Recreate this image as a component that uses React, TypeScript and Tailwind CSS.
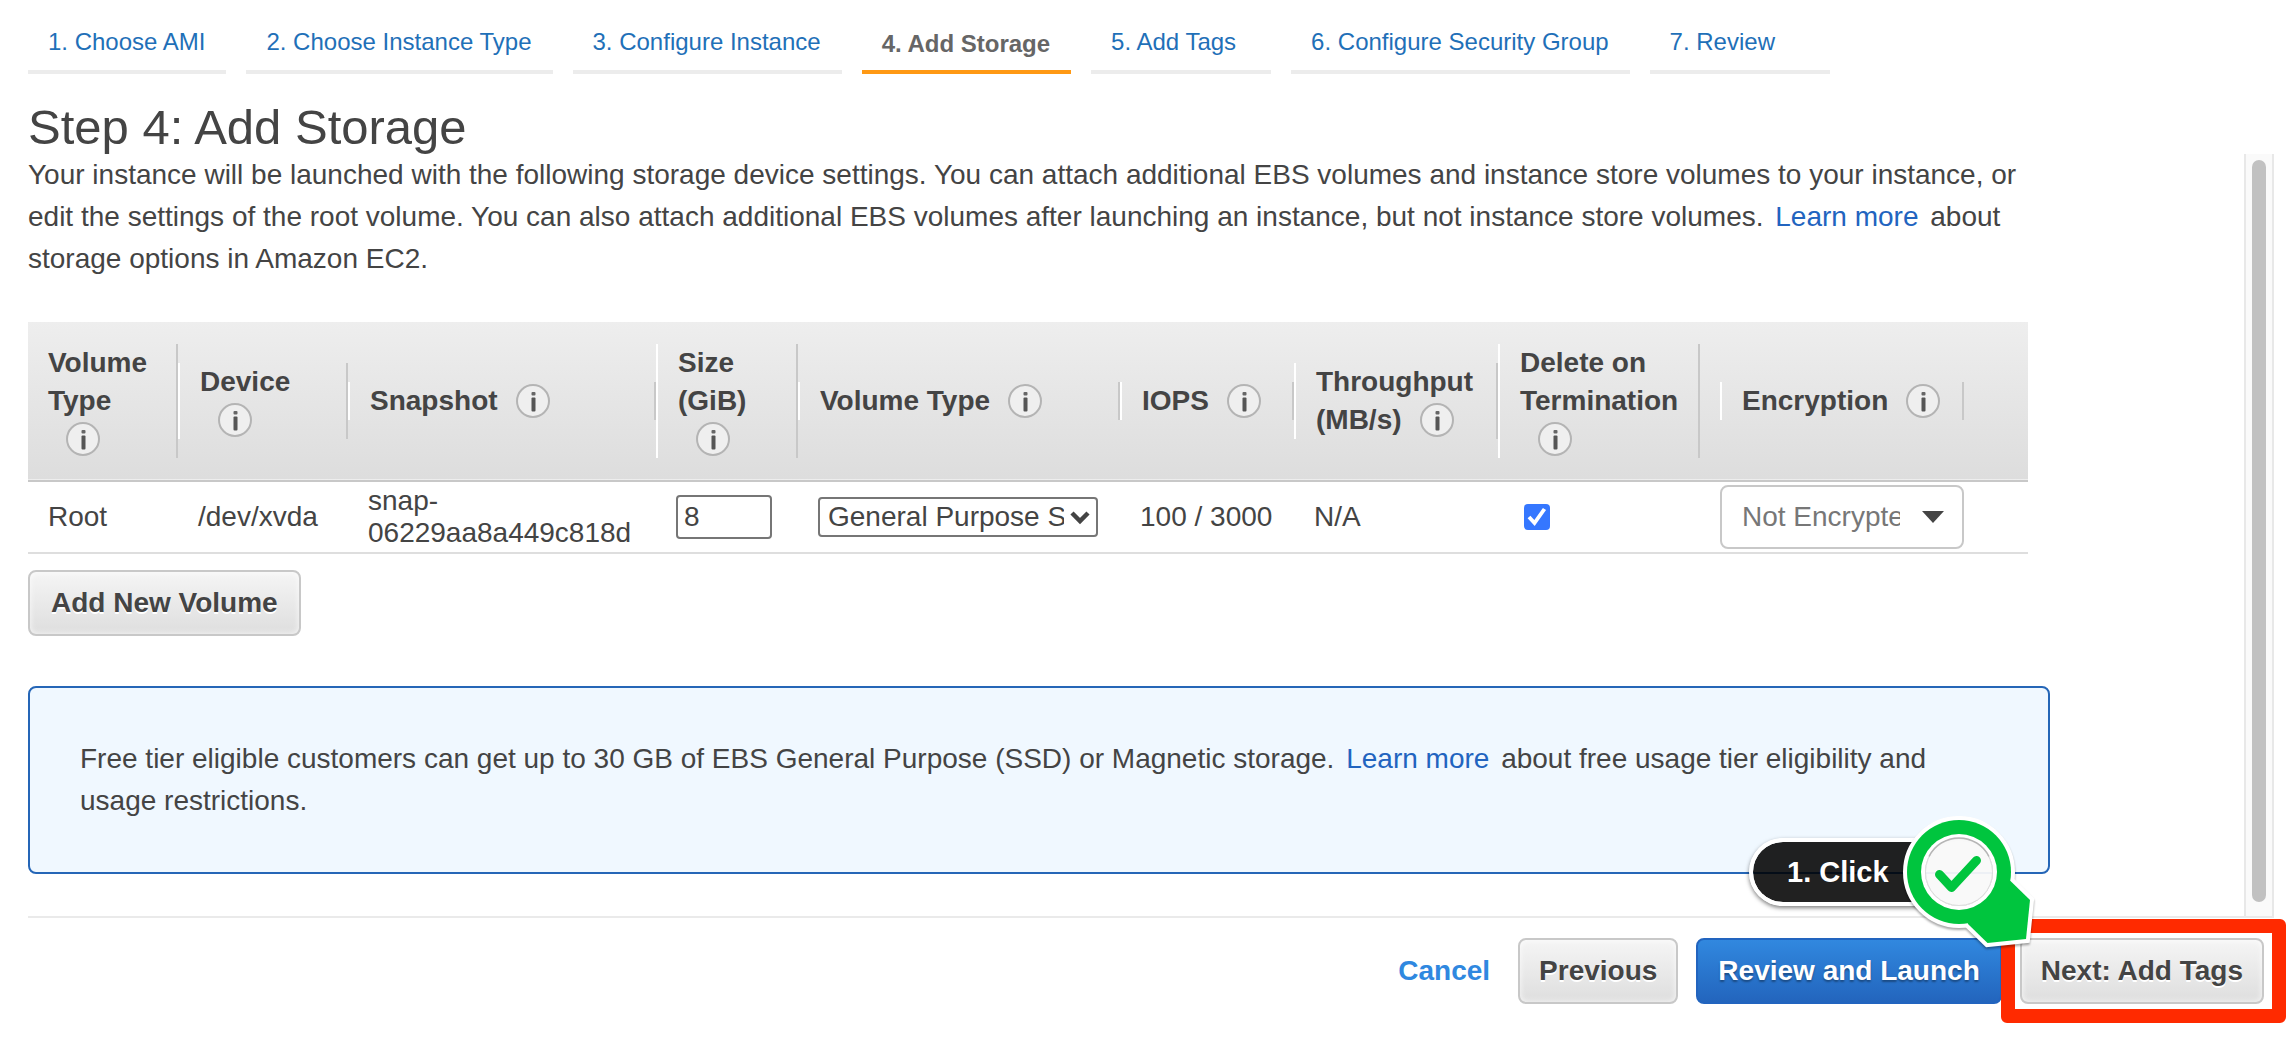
import { ReactNode } from "react";

const steps = [
  "1. Choose AMI",
  "2. Choose Instance Type",
  "3. Configure Instance",
  "4. Add Storage",
  "5. Add Tags",
  "6. Configure Security Group",
  "7. Review",
];

function InfoIcon() {
  return (
    <svg className="-mt-1 ml-[18px] inline-block h-[34px] w-[34px] align-middle" viewBox="0 0 34 34" aria-label="Info" role="img">
      <circle cx="17" cy="17" r="16" fill="#efefef" stroke="#b4b4b4" strokeWidth="2" />
      <rect x="15.5" y="8" width="4" height="3.6" rx="1" fill="#666" />
      <rect x="15.5" y="13.5" width="4" height="14" rx="1" fill="#555" />
    </svg>
  );
}

function HeadCell({ children, first, last, width }: { children: ReactNode; first?: boolean; last?: boolean; width: string }) {
  return (
    <th scope="col" className={`${width} p-0 text-left align-middle font-bold ${last ? "pr-5" : ""}`}>
      <div className={`border-r-2 border-l-2 border-r-[#c8c8c8] ${first ? "border-l-transparent pl-[18px]" : "border-l-white pl-5"} pr-5 leading-[38px]`}>
        {children}
        <InfoIcon />
      </div>
    </th>
  );
}

const greyButton =
  "h-[66px] rounded-lg border-2 border-[#c8c8c8] bg-linear-to-b from-[#f5f5f5] to-[#dedede] font-bold text-[#444] [text-shadow:0_2px_0_#fff] inset-shadow-[0_0_6px_rgba(255,255,255,0.8)] whitespace-nowrap";

function ClickMarker() {
  return (
    <>
      <div className="absolute right-[346px] bottom-[98px] flex h-[68px] w-[169px] items-center rounded-l-full border-4 border-r-0 border-white bg-[rgba(0,0,0,0.87)] bg-clip-padding pl-[34px] text-[29px] font-bold whitespace-nowrap text-white shadow-[0_2px_4px_rgba(0,0,0,0.5)]">
        1. Click
      </div>
      <svg
        className="pointer-events-none absolute right-[204px] bottom-[44px] h-[160px] w-[180px] drop-shadow-[0_2px_1px_rgba(0,0,0,0.35)]"
        viewBox="1880 800 180 160"
        aria-hidden="true"
      >
        <mask id="ring">
          <rect x="1880" y="800" width="180" height="160" fill="#fff" />
          <circle cx="1959" cy="872" r="34" fill="#000" />
        </mask>
        <g mask="url(#ring)">
          <g fill="#fff" stroke="#fff" strokeWidth="8">
            <path d="M1959 872L2010.5 881L2030 900L2026 939L1987.5 943L1968 924Z" />
            <circle cx="1959" cy="872" r="52" />
          </g>
          <path d="M1959 872L2010.5 881L2030 900L2026 939L1987.5 943L1968 924Z" fill="#00c53e" />
          <circle cx="1959" cy="872" r="52" fill="#00c53e" />
          <circle cx="1959" cy="872" r="38" fill="#fff" />
        </g>
        <circle cx="1959" cy="872" r="34" fill="#fff" fillOpacity="0.92" />
        <circle cx="1959" cy="872" r="33.5" fill="none" stroke="#dcdcdc" strokeWidth="1" />
        <path d="M1929 856.500A33.500 33.500 0 0 1 1989 856.500" fill="none" stroke="#b5b5b5" strokeWidth="1.500" />
        <path d="M1939.500 874.500L1951.500 887.500L1976.500 860.500" fill="none" stroke="#00c53e" strokeWidth="9" strokeLinecap="round" strokeLinejoin="round" />
      </svg>
    </>
  );
}

export default function App() {
  return (
    <div className="flex min-h-screen flex-col bg-white pr-5 pl-7 font-['Liberation_Sans',Arial,sans-serif] text-[28px] leading-[42px] text-[#444]">
      <nav aria-label="Wizard steps" className="flex gap-5 pt-6 text-[24px] leading-[36px]">
        {steps.map((s, i) =>
          i === 3 ? (
            <a key={s} href="#step" aria-current="step" className="h-[50px] border-b-4 border-[#ff9914] pt-[2px] pr-[21px] pl-5 font-bold whitespace-nowrap text-[#666]">
              {s}
            </a>
          ) : (
            <a key={s} href="#step" className="h-[50px] min-w-[180px] border-b-4 border-[#ececec] pr-[21px] pl-5 whitespace-nowrap text-[#1f70b8]">
              {s}
            </a>
          ),
        )}
      </nav>

      <h1 className="mt-[26px] text-[49px] leading-[54px]">Step 4: Add Storage</h1>

      <div className="flex flex-1">
        <main className="mr-[194px] min-w-0 flex-1">
          <p>
            Your instance will be launched with the following storage device settings. You can attach additional EBS volumes and instance store volumes to your instance, or
            edit the settings of the root volume. You can also attach additional EBS volumes after launching an instance, but not instance store volumes.{" "}
            <a href="#learn" className="mx-1 text-[#2264bf]">Learn more</a> about storage options in Amazon EC2.
          </p>

          <div className="mt-[42px] pr-[22px]">
            <table className="w-full table-fixed border-collapse">
              <thead className="h-[159px] border-b-2 border-[#c8c8c8] bg-linear-to-b from-[#eeeeee] to-[#dddddd]">
                <tr>
                  <HeadCell width="w-[150px]" first>Volume Type</HeadCell>
                  <HeadCell width="w-[170px]">Device</HeadCell>
                  <HeadCell width="w-[308px]">Snapshot</HeadCell>
                  <HeadCell width="w-[142px]">Size (GiB)</HeadCell>
                  <HeadCell width="w-[322px]">Volume Type</HeadCell>
                  <HeadCell width="w-[174px]">IOPS</HeadCell>
                  <HeadCell width="w-[204px]">Throughput (MB/s)</HeadCell>
                  <HeadCell width="w-[222px]" last>Delete on Termination</HeadCell>
                  <HeadCell width="w-[244px]">Encryption</HeadCell>
                  <td />
                </tr>
              </thead>
              <tbody>
                <tr className="h-[72px] border-b-2 border-[#dedede] leading-8 [&>td]:p-0 [&>td]:pl-5">
                  <td>Root</td>
                  <td>/dev/xvda</td>
                  <td>snap-<br />06229aa8a449c818d</td>
                  <td>
                    <input aria-label="Size (GiB)" defaultValue="8" className="block h-[44px] w-[96px] rounded border-2 border-[#767676] px-[6px]" />
                  </td>
                  <td>
                    <div className="relative w-[280px]">
                      <select aria-label="Volume type" className="block h-10 w-full appearance-none rounded border-2 border-[#767676] bg-white pr-8 pl-2 leading-8">
                        <option>General Purpose SSD (gp2)</option>
                      </select>
                      <svg className="pointer-events-none absolute top-3 right-2 h-4 w-5" viewBox="0 0 20 16" fill="none" stroke="#444" strokeWidth="4.500">
                        <path d="M2 4l8 8 8-8" />
                      </svg>
                    </div>
                  </td>
                  <td className="whitespace-nowrap">100 / 3000</td>
                  <td>N/A</td>
                  <td>
                    <div className="relative ml-[6px] h-[26px] w-[26px]">
                      <input type="checkbox" defaultChecked aria-label="Delete on termination" className="block h-[26px] w-[26px] appearance-none rounded bg-[#3577ff]" />
                      <svg className="pointer-events-none absolute inset-0 h-[26px] w-[26px]" viewBox="0 0 26 26" fill="none" stroke="#fff" strokeWidth="3.800">
                        <path d="M5 13l5.500 6L20.500 5" />
                      </svg>
                    </div>
                  </td>
                  <td colSpan={2} className="pl-0!">
                    <button className="flex h-[64px] w-[244px] items-center justify-between rounded-lg border-2 border-[#c8c8c8] bg-white pr-[18px] pl-5 text-[#777]">
                      <span className="w-[158px] overflow-hidden text-left whitespace-nowrap">Not Encrypted</span>
                      <svg className="h-3 w-[22px]" viewBox="0 0 22 12" fill="#444"><path d="M0 0h22L11 12z" /></svg>
                    </button>
                  </td>
                </tr>
              </tbody>
            </table>
          </div>

          <button className={`${greyButton} mt-4 px-[21px]`}>Add New Volume</button>

          <section className="mt-[50px] rounded-lg border-2 border-[#2566b7] bg-[#f0f8ff] p-[50px]">
            Free tier eligible customers can get up to 30 GB of EBS General Purpose (SSD) or Magnetic storage.{" "}
            <a href="#free" className="mx-1 text-[#2264bf]">Learn more</a> about free usage tier eligibility and usage restrictions.
          </section>
        </main>
        <div className="flex w-[30px] border-x-2 border-[#e8e8e8] bg-[#fafafa] px-[6px] pt-[6px] pb-[14px]">
          <div className="flex-1 rounded-full bg-[#c1c1c1]" />
        </div>
      </div>

      <footer className="flex items-center justify-end gap-[18px] border-t-2 border-[#eaeaea] pt-5 pr-[10px] pb-[34px]">
        <a href="#cancel" className="mr-[10px] font-bold text-[#2f88e0]">Cancel</a>
        <button className={`${greyButton} px-[19px]`}>Previous</button>
        <button className="h-[66px] rounded-lg border-2 border-[#2264bf] bg-linear-to-b from-[#3188df] to-[#2365bd] px-5 font-bold whitespace-nowrap text-white [text-shadow:0_2px_2px_rgba(0,0,0,0.35)]">
          Review and Launch
        </button>
        <div className="relative flex">
          <button className={`${greyButton} px-[19px]`}>Next: Add Tags</button>
          <div className="pointer-events-none absolute -inset-[19px] -right-[22px] rounded-md border-[14px] border-[#ff2a00]" />
          <ClickMarker />
        </div>
      </footer>
    </div>
  );
}
